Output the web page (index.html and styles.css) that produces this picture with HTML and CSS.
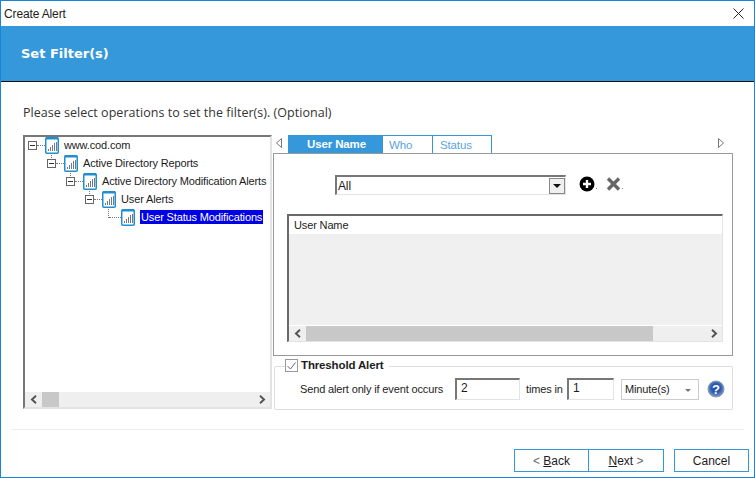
FILE: index.html
```html
<!DOCTYPE html>
<html lang="en">
<head>
    <meta charset="UTF-8">
    <title>Create Alert</title>
    <link rel="stylesheet" href="styles.css">
</head>
<body>
    <svg class="defs" width="0" height="0">
        <symbol id="report" viewBox="0 0 14 18">
            <rect x="0.75" y="1.75" width="12.5" height="15.5" rx="1" fill="#fff" stroke="#1f8fd0" stroke-width="1.5"/>
            <rect x="1" y="1" width="12" height="2.5" fill="#1f8fd0"/>
            <path d="M3.5 15v-2M5.5 15v-4M7.5 15v-6M9.500 15v-8M11.500 15v-9" stroke="#6b7a86" stroke-width="1"/>
        </symbol>
        <symbol id="chev-left" viewBox="0 0 8 9">
            <path d="M6 0.800L2 4.500l4 3.700" fill="none" stroke="#555" stroke-width="2"/>
        </symbol>
        <symbol id="chev-right" viewBox="0 0 8 9">
            <path d="M2 0.800L6 4.500l-4 3.700" fill="none" stroke="#555" stroke-width="2"/>
        </symbol>
    </svg>
    <div class="window">
        <div class="titlebar">
            <span>Create Alert</span>
            <svg class="close" width="11" height="11" viewBox="0 0 11 11"><path d="M0.500 0.500l10 10M10.500 0.500l-10 10" stroke="#222" stroke-width="1"/></svg>
        </div>
        <div class="banner">Set Filter(s)</div>
        <p class="prompt">Please select operations to set the filter(s). (Optional)</p>

        <div class="main">
            <div class="tree-box">
                <ul class="tree">
                    <li class="node"><span class="expander"></span><span class="dots"></span><svg class="node-icon"><use href="#report"/></svg><span class="label">www.cod.com</span></li>
                    <li class="node lvl1"><span class="expander"></span><span class="dots"></span><svg class="node-icon"><use href="#report"/></svg><span class="label">Active Directory Reports</span></li>
                    <li class="node lvl2"><span class="expander"></span><span class="dots"></span><svg class="node-icon"><use href="#report"/></svg><span class="label">Active Directory Modification Alerts</span></li>
                    <li class="node lvl3"><span class="expander"></span><span class="dots"></span><svg class="node-icon"><use href="#report"/></svg><span class="label">User Alerts</span></li>
                    <li class="node lvl4 leaf"><span class="elbow"></span><svg class="node-icon"><use href="#report"/></svg><span class="label selected">User Status Modifications</span></li>
                </ul>
                <div class="scrollbar">
                    <svg class="arrow"><use href="#chev-left"/></svg>
                    <div class="track"><div class="thumb tree-thumb"></div></div>
                    <svg class="arrow"><use href="#chev-right"/></svg>
                </div>
            </div>

            <div class="right">
                <div class="tabstrip">
                    <svg class="tab-scroll" width="6" height="10" viewBox="0 0 6 10"><path d="M5.500 0.500v9L0.500 5z" fill="#fff" stroke="#777"/></svg>
                    <div class="tab active">User Name</div>
                    <div class="tab who">Who</div>
                    <div class="tab status">Status</div>
                    <svg class="tab-scroll next" width="6" height="10" viewBox="0 0 6 10"><path d="M0.500 0.500v9L5.500 5z" fill="#fff" stroke="#777"/></svg>
                </div>
                <div class="panel">
                    <div class="filter-row">
                        <div class="combo">
                            <span class="combo-value">All</span>
                            <span class="combo-btn"></span>
                        </div>
                        <svg class="tool" width="16" height="16" viewBox="0 0 16 16"><circle cx="8" cy="8" r="7.500" fill="#000"/><path d="M8 4v8M4 8h8" stroke="#fff" stroke-width="2.400"/></svg>
                        <span class="tool-dot"></span>
                        <svg class="tool remove" width="15" height="14" viewBox="0 0 15 14"><path d="M2 1.500l11 11M13 1.500l-11 11" stroke="#666" stroke-width="3.400"/></svg>
                        <span class="tool-dot"></span>
                    </div>
                    <div class="grid">
                        <div class="grid-head">User Name</div>
                        <div class="grid-body"></div>
                        <div class="scrollbar">
                            <svg class="arrow"><use href="#chev-left"/></svg>
                            <div class="track"><div class="thumb grid-thumb"></div></div>
                            <svg class="arrow"><use href="#chev-right"/></svg>
                        </div>
                    </div>
                </div>

                <fieldset class="threshold">
                    <legend><span class="check"><svg width="9" height="8" viewBox="0 0 9 8"><path d="M0.500 4l3 3 5-6.500" fill="none" stroke="#666" stroke-width="1"/></svg></span>Threshold Alert</legend>
                    <div class="threshold-row">
                        <span class="send-label">Send alert only if event occurs</span>
                        <div class="input count">2</div>
                        <span class="times">times in</span>
                        <div class="input period">1</div>
                        <div class="unit">Minute(s)<span class="caret"></span></div>
                        <svg class="help" width="18" height="18" viewBox="0 0 18 18">
                            <defs>
                                <radialGradient id="help-fill" cx="50%" cy="45%" r="55%">
                                    <stop offset="0.500" stop-color="#2a55ad"/>
                                    <stop offset="1" stop-color="#7f9ccc"/>
                                </radialGradient>
                            </defs>
                            <circle cx="9" cy="9" r="8" fill="url(#help-fill)" stroke="#8d99ab" stroke-width="1"/>
                            <text x="9" y="13.500" text-anchor="middle">?</text>
                        </svg>
                    </div>
                </fieldset>
            </div>
        </div>

        <div class="separator"></div>

        <div class="buttons">
            <button class="btn"><span class="chev">&lt;</span> <u>B</u>ack</button>
            <button class="btn"><u>N</u>ext <span class="chev">&gt;</span></button>
            <button class="btn cancel">Cancel</button>
        </div>
    </div>
</body>
</html>
```

FILE: styles.css
```css
* {
    box-sizing: border-box;
}
body {
    margin: 0;
    width: 755px;
    height: 478px;
    overflow: hidden;
    background: #fff;
    font-family: "Liberation Sans", sans-serif;
    font-size: 11px;
    letter-spacing: -0.14px;
    color: #1c1c1c;
}
.defs {
    position: absolute;
}
.window {
    width: 755px;
    height: 478px;
    border: 1px solid #1c86d6;
    display: flex;
    flex-direction: column;
}
.titlebar {
    height: 25px;
    flex: none;
    padding: 0 10px 0 3px;
    display: flex;
    align-items: center;
    justify-content: space-between;
    font-size: 12px;
}
.banner {
    height: 56px;
    flex: none;
    background: #3498db;
    border-bottom: 1px solid #111;
    padding: 0 0 1px 20px;
    display: flex;
    align-items: center;
    font-family: "DejaVu Sans", sans-serif;
    font-weight: bold;
    font-size: 13px;
    letter-spacing: 0;
    color: #fff;
}
.prompt {
    margin: 22px 0 0 22px;
    height: 18px;
    line-height: 18px;
    font-family: "Open Sans", sans-serif;
    font-size: 12.5px;
    letter-spacing: 0.03px;
    color: #333;
}
.main {
    margin: 13px 0 0 22px;
    display: flex;
    gap: 1px;
}

/* tree */
.tree-box {
    width: 249px;
    height: 274px;
    border: 1px solid #e3e3e3;
    border-top: 2px solid #777;
    border-left: 2px solid #777;
    border-right-width: 2px;
    border-bottom-width: 2px;
    display: flex;
    flex-direction: column;
}
.tree {
    flex: 1;
    list-style: none;
    margin: -1px 0 0;
    padding: 0 0 0 3px;
    white-space: nowrap;
}
.node {
    height: 18px;
    display: flex;
    align-items: center;
    position: relative;
}
.lvl1 { padding-left: 19px; }
.lvl2 { padding-left: 38px; }
.lvl3 { padding-left: 57px; }
.lvl4 { padding-left: 76px; }
.expander {
    width: 9px;
    height: 9px;
    flex: none;
    border: 1px solid #666;
    background: linear-gradient(#333, #333) center / 5px 1px no-repeat #fff;
}
.dots {
    width: 8px;
    height: 1px;
    flex: none;
    border-top: 1px dotted #777;
}
/* vertical connector drops from the parent icon into the next row */
.node:not(.leaf)::after {
    content: "";
    position: absolute;
    top: 17px;
    height: 5px;
    border-left: 1px dotted #777;
    left: 23px;
}
.lvl1::after { left: 42px !important; }
.lvl2::after { left: 61px !important; }
.lvl3::after { left: 80px !important; height: 11px !important; }
.elbow {
    width: 12px;
    height: 1px;
    margin-left: 5px;
    flex: none;
    border-top: 1px dotted #777;
}
.node-icon {
    width: 14px;
    height: 18px;
    flex: none;
}
.label {
    margin-left: 5px;
    line-height: 14px;
}
.selected {
    margin-left: 5px;
    padding: 0 1px;
    background: #0000e6;
    color: #fff;
}

/* scrollbars */
.scrollbar {
    height: 15px;
    flex: none;
    background: #efefef;
    display: flex;
    align-items: center;
}
.arrow {
    width: 8px;
    height: 9px;
    flex: none;
    margin: 0 4px 0 5px;
}
.track {
    flex: 1;
    height: 15px;
}
.thumb {
    height: 15px;
    background: #c8c8c8;
}
.tree-thumb {
    width: 17px;
}
.grid-thumb {
    width: 347px;
}

/* tabs */
.right {
    width: 460px;
}
.tabstrip {
    height: 18px;
    display: flex;
    align-items: center;
    padding-left: 3px;
}
.tab-scroll {
    flex: none;
    margin-top: -2px;
}
.tab-scroll.next {
    margin-left: 226px;
}
.tab {
    height: 18px;
    border: 1px solid #3498db;
    border-bottom: 0;
    border-left: 0;
    color: #5aa5e0;
    display: flex;
    align-items: center;
    font-size: 11.5px;
}
.tab.active {
    width: 95px;
    margin-left: 6px;
    justify-content: center;
    padding: 0 0 1px 3px;
    background: #3498db;
    color: #fff;
    font-weight: bold;
}
.who {
    width: 50px;
    padding-left: 6px;
}
.status {
    width: 59px;
    padding-left: 7px;
}
.panel {
    height: 203px;
    border: 1px solid #999;
    padding: 21px 9px 0 13px;
}
.filter-row {
    display: flex;
    align-items: center;
    padding-left: 48px;
    height: 20px;
}
.combo {
    width: 231px;
    height: 20px;
    border: 1px solid #e3e3e3;
    border-top: 2px solid #777;
    border-left: 2px solid #777;
    display: flex;
    align-items: center;
    justify-content: space-between;
    padding-left: 1px;
    font-size: 12px;
}
.combo-btn {
    width: 16px;
    height: 16px;
    border: 1px solid #888;
    background: #f0f0f0;
    position: relative;
}
.combo-btn::after {
    content: "";
    position: absolute;
    left: 3px;
    top: 5px;
    border: 4px solid transparent;
    border-top: 4px solid #111;
    border-bottom: 0;
}
.tool {
    margin-left: 13px;
    margin-top: -3px;
    flex: none;
}
.tool.remove {
    margin-left: 9px;
}
.tool-dot {
    width: 1px;
    height: 1px;
    margin: 7px 0 0 1px;
    background: #888;
    flex: none;
}
.grid {
    height: 128px;
    margin-top: 19px;
    border: 1px solid #e3e3e3;
    border-top: 2px solid #696969;
    border-left: 2px solid #696969;
    display: flex;
    flex-direction: column;
}
.grid-head {
    height: 18px;
    line-height: 18px;
    padding-left: 5px;
    flex: none;
}
.grid-body {
    flex: 1;
    background: #f0f0f0;
    border-bottom: 1px solid #fff;
}

/* threshold group */
.threshold {
    margin: 3px 0 0 1px;
    padding: 0;
    height: 51px;
    border: 1px solid #ddd;
    border-radius: 2px;
}
.threshold legend {
    margin-left: 10px;
    padding: 0 6px 1px 0;
    font-weight: bold;
    font-size: 11.5px;
    height: 14px;
    line-height: 13px;
    display: flex;
    align-items: center;
}
.check {
    width: 13px;
    height: 13px;
    margin-right: 3px;
    border: 1px solid #999;
    display: flex;
    align-items: center;
    justify-content: center;
}
.threshold-row {
    display: flex;
    align-items: center;
    height: 22px;
    margin-top: 5px;
    padding-left: 25px;
}
.send-label {
    width: 155px;
    flex: none;
    white-space: nowrap;
}
.input {
    height: 22px;
    flex: none;
    border: 1px solid #e3e3e3;
    border-top: 2px solid #777;
    border-left: 2px solid #777;
    padding-left: 4px;
    line-height: 17px;
    font-size: 12px;
}
.count {
    width: 65px;
}
.times {
    width: 47px;
    flex: none;
    padding-left: 6px;
    white-space: nowrap;
}
.period {
    width: 47px;
}
.unit {
    width: 78px;
    height: 21px;
    flex: none;
    margin-left: 7px;
    border: 1px solid #ccc;
    padding-left: 3px;
    display: flex;
    align-items: center;
    position: relative;
}
.caret {
    position: absolute;
    right: 7px;
    top: 9px;
    border: 3px solid transparent;
    border-top: 3px solid #777;
    border-bottom: 0;
}
.help {
    margin-left: 8px;
    flex: none;
}
.help text {
    font-family: "Liberation Sans", sans-serif;
    font-weight: bold;
    font-size: 13px;
    fill: #fff;
}

/* footer */
.separator {
    height: 1px;
    margin: 19px 10px 0 11px;
    background: #ececec;
    flex: none;
}
.buttons {
    display: flex;
    justify-content: flex-end;
    padding-right: 5px;
    margin-top: 19px;
}
.btn {
    width: 75px;
    height: 23px;
    padding: 0;
    border: 1px solid #3498db;
    background: #fff;
    font-family: inherit;
    font-size: 12px;
    color: #1c1c1c;
}
.btn + .btn {
    border-left: 0;
}
.btn.cancel {
    margin-left: 10px;
    border-left: 1px solid #3498db;
}
.chev {
    color: #666;
}
```
